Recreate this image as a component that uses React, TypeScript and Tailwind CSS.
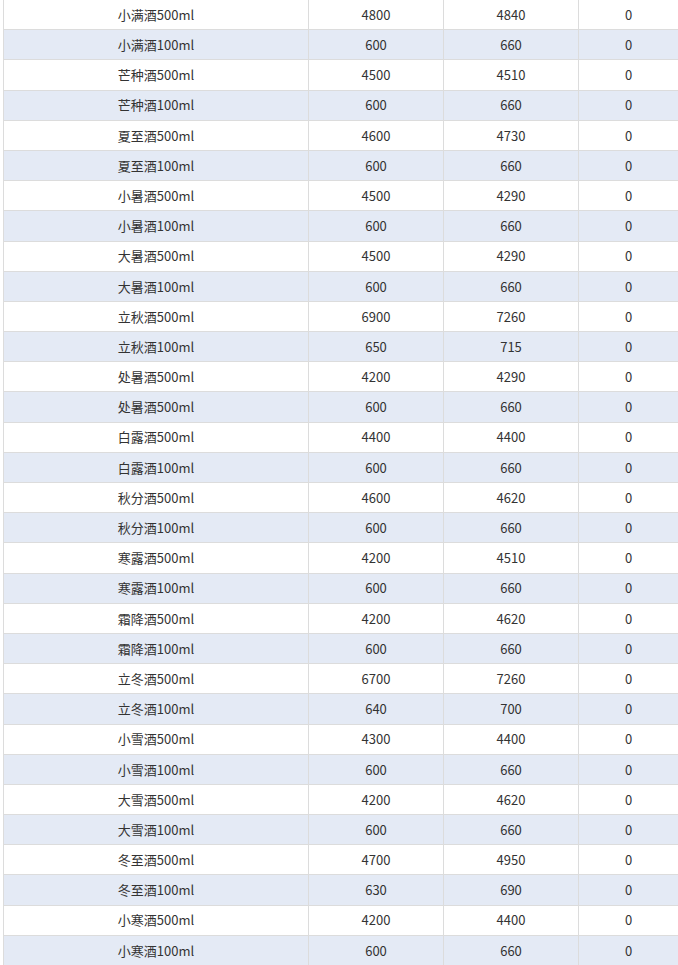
const rows: [string, number, number, number][] = [
  ["小满酒500ml", 4800, 4840, 0],
  ["小满酒100ml", 600, 660, 0],
  ["芒种酒500ml", 4500, 4510, 0],
  ["芒种酒100ml", 600, 660, 0],
  ["夏至酒500ml", 4600, 4730, 0],
  ["夏至酒100ml", 600, 660, 0],
  ["小暑酒500ml", 4500, 4290, 0],
  ["小暑酒100ml", 600, 660, 0],
  ["大暑酒500ml", 4500, 4290, 0],
  ["大暑酒100ml", 600, 660, 0],
  ["立秋酒500ml", 6900, 7260, 0],
  ["立秋酒100ml", 650, 715, 0],
  ["处暑酒500ml", 4200, 4290, 0],
  ["处暑酒500ml", 600, 660, 0],
  ["白露酒500ml", 4400, 4400, 0],
  ["白露酒100ml", 600, 660, 0],
  ["秋分酒500ml", 4600, 4620, 0],
  ["秋分酒100ml", 600, 660, 0],
  ["寒露酒500ml", 4200, 4510, 0],
  ["寒露酒100ml", 600, 660, 0],
  ["霜降酒500ml", 4200, 4620, 0],
  ["霜降酒100ml", 600, 660, 0],
  ["立冬酒500ml", 6700, 7260, 0],
  ["立冬酒100ml", 640, 700, 0],
  ["小雪酒500ml", 4300, 4400, 0],
  ["小雪酒100ml", 600, 660, 0],
  ["大雪酒500ml", 4200, 4620, 0],
  ["大雪酒100ml", 600, 660, 0],
  ["冬至酒500ml", 4700, 4950, 0],
  ["冬至酒100ml", 630, 690, 0],
  ["小寒酒500ml", 4200, 4400, 0],
  ["小寒酒100ml", 600, 660, 0],
];

export default function App() {
  return (
    <div
      className="w-[678px] h-[965px] overflow-hidden bg-white pl-[3px] text-[13px] text-[#333]"
      style={{ fontFamily: '"Noto Sans CJK SC", "Noto Sans", sans-serif' }}
    >
      <div className="border-l border-[#dcdcdc]">
        {rows.map((r, i) => (
          <div
            key={i}
            className={`grid grid-cols-[304px_135px_135px_1fr] h-[30.2px] border-b border-[#dcdcdc] ${
              i % 2 === 1 ? "bg-[#e4eaf5]" : "bg-white"
            }`}
          >
            <div className="flex items-center justify-center">{r[0]}</div>
            <div className="flex items-center justify-center border-l border-[#dcdcdc]">{r[1]}</div>
            <div className="flex items-center justify-center border-l border-[#dcdcdc]">{r[2]}</div>
            <div className="flex items-center justify-center border-l border-[#dcdcdc]">{r[3]}</div>
          </div>
        ))}
      </div>
    </div>
  );
}
